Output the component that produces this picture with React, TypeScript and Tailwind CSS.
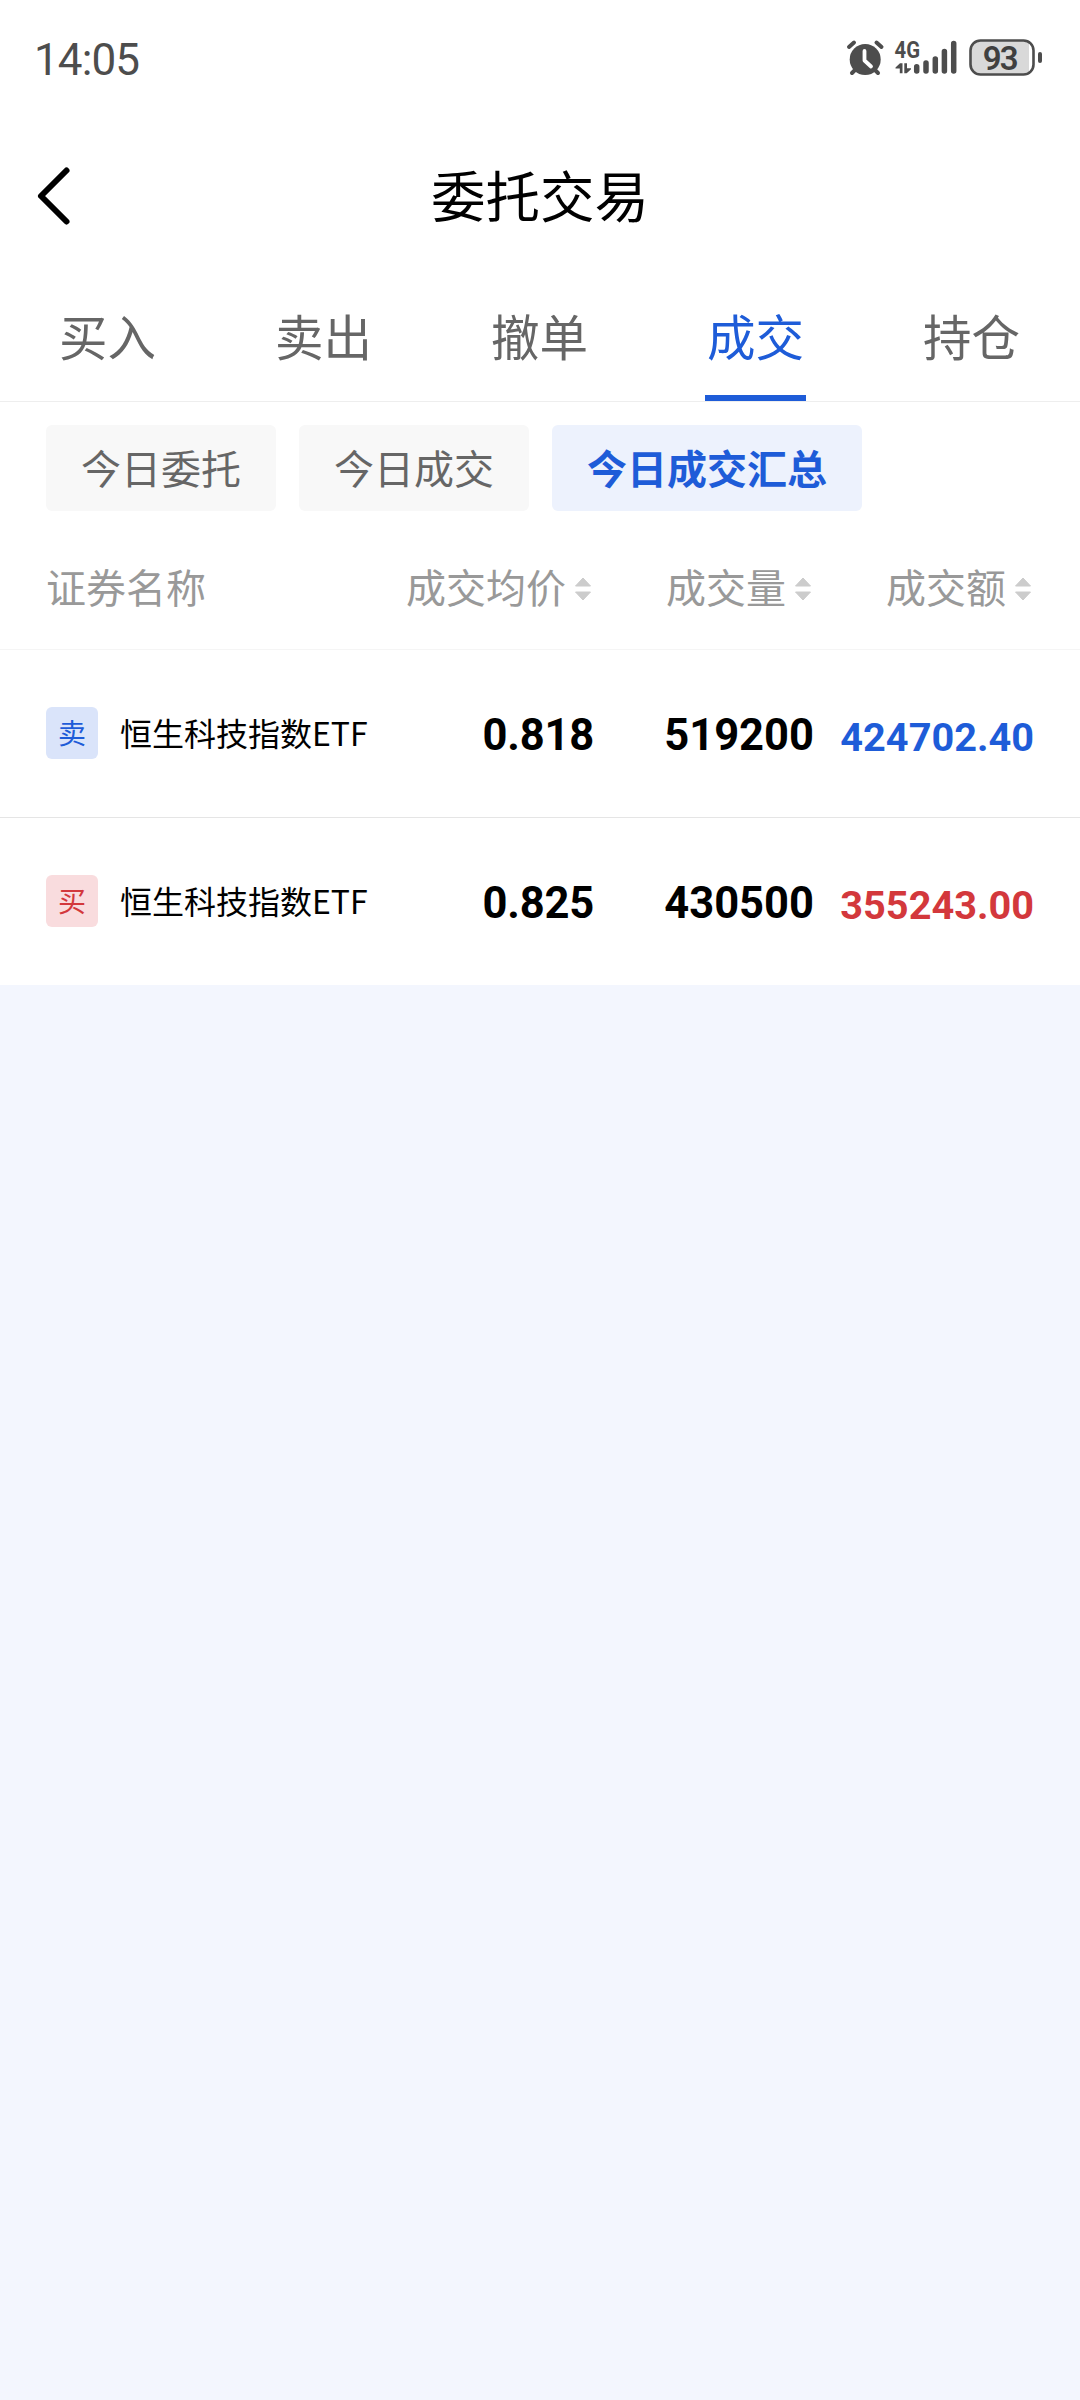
import clsx from "clsx";

const TABS = ["买入", "卖出", "撤单", "成交", "持仓"];
const FILTERS = ["今日委托", "今日成交", "今日成交汇总"];

interface Trade {
  side: "buy" | "sell";
  name: string;
  price: string;
  volume: string;
  amount: string;
}

const TRADES: Trade[] = [
  { side: "sell", name: "恒生科技指数ETF", price: "0.818", volume: "519200", amount: "424702.40" },
  { side: "buy", name: "恒生科技指数ETF", price: "0.825", volume: "430500", amount: "355243.00" },
];

function StatusBar() {
  return (
    <div className="flex h-[116px] items-center justify-between pr-[38px] pl-[34px] font-['Roboto',sans-serif] text-[#4d4d4d]">
      <span className="pt-[3px] text-[44px] leading-none tracking-[-0.9px]">14:05</span>
      <svg width="196" height="40" viewBox="0 0 196 40" fill="none">
        {/* alarm clock */}
        <g stroke="#4d4d4d" strokeLinecap="round">
          <path d="M3 9 8 4.500M30.500 4.500l5 4.500" strokeWidth="4" />
          <path d="M9 32l-3 3M29 32l3 3" strokeWidth="4" />
        </g>
        <circle cx="19.200" cy="21.500" r="15.500" fill="#4d4d4d" />
        <path d="M18.500 13v9.500l6.500 6" stroke="#fff" strokeWidth="3.800" strokeLinecap="round" strokeLinejoin="round" />
        {/* network type and traffic arrows */}
        <text x="48.500" y="19.700" fontSize="23" fontWeight="700" textLength="25.500" lengthAdjust="spacingAndGlyphs" fill="#4d4d4d">
          4G
        </text>
        <path d="M56.500 35.300h-2.700V30.500H49.500v-1l4.500-4.200h2.500zM58.300 25.300H61v4.900h4v1l-4.300 4.100h-2.400z" fill="#4d4d4d" />
        {/* signal strength */}
        <path
          d="M70.700 28.700v4.300M80 25v8M89.300 21v12M98.400 13.500V33M107.700 5.500V33"
          stroke="#4d4d4d"
          strokeWidth="5.500"
          strokeLinecap="round"
        />
        {/* battery */}
        <rect x="124.500" y="2.500" width="63" height="34" rx="10" fill="#fff" />
        <path d="M134.500 2.500H183v34h-48.500a10 10 0 0 1-10-10v-14a10 10 0 0 1 10-10z" fill="#d9d9d9" />
        <rect x="124.500" y="2.500" width="63" height="34" rx="10" stroke="#4d4d4d" strokeWidth="2.600" />
        <path d="M194 16v7" stroke="#4d4d4d" strokeWidth="4" strokeLinecap="round" />
        <text x="154.700" y="31.500" fontSize="33" fontWeight="600" textAnchor="middle" textLength="36" fill="#404040">
          93
        </text>
      </svg>
    </div>
  );
}

function SortIcon() {
  return (
    <svg className="mt-1.5 ml-2 shrink-0" width="18" height="24" viewBox="0 0 18 24" fill="#ccc" stroke="#ccc" strokeLinejoin="round">
      <path d="M9 1l7.500 8h-15z" />
      <path d="M9 23l7.500-8h-15z" />
    </svg>
  );
}

function TradeRow({ trade }: { trade: Trade }) {
  const isSell = trade.side === "sell";

  return (
    <div className="flex h-[168px] items-center border-b border-[#e5e5e5] pr-[46px] pb-px pl-[46px] last:h-[167px] last:border-b-0">
      <span
        className={clsx(
          "flex size-[52px] items-center justify-center rounded-md pb-0.5 text-[28px] leading-none",
          isSell ? "bg-[#dae4fa] text-[#1e5cd8]" : "bg-[#f9dcde] text-[#d3383c]",
        )}
      >
        {isSell ? "卖" : "买"}
      </span>
      <span className="ml-[22px] pb-0.5 text-[32px] leading-none">{trade.name}</span>
      <div className="flex flex-1 items-center justify-end pt-1.5 font-['Roboto',sans-serif] font-bold">
        <span className="text-[43.500px] leading-none tracking-[-0.2px]">{trade.price}</span>
        <span className="w-[220px] text-right text-[43.500px] leading-none">{trade.volume}</span>
        <span
          className={clsx(
            "mt-[3px] w-[220px] text-right text-[39.700px] leading-none",
            isSell ? "text-[#1e5cd8]" : "text-[#d3383c]",
          )}
        >
          {trade.amount}
        </span>
      </div>
    </div>
  );
}

export default function App() {
  const activeTab = "成交";
  const activeFilter = "今日成交汇总";

  return (
    <div className="min-h-[2400px] w-[1080px] bg-[#f3f6fe] font-['Noto_Sans_CJK_SC',sans-serif] text-black">
      <div className="bg-white">
        <StatusBar />

        <header className="grid h-40 grid-cols-[1fr_auto_1fr] items-center">
          <button type="button" aria-label="返回" className="ml-9">
            <svg width="36" height="60" viewBox="0 0 36 60" fill="none" stroke="#000" strokeWidth="6" strokeLinecap="round" strokeLinejoin="round">
              <path d="M30.500 4.500L5 30l25.500 25.500" />
            </svg>
          </button>
          <h1 className="pb-[3px] text-[54.500px] leading-none">委托交易</h1>
        </header>

        <nav className="grid h-[126px] grid-cols-5 border-b border-[#eee]">
          {TABS.map((tab) => (
            <button
              key={tab}
              type="button"
              className={clsx(
                "flex flex-col items-center pr-px text-[48.500px] leading-none",
                tab === activeTab ? "text-[#1e5cd8]" : "text-[#666]",
              )}
            >
              <span className="mt-[35px]">{tab}</span>
              {tab === activeTab && <span className="mt-auto h-1.5 w-[101px] bg-[#1e5cd8]" />}
            </button>
          ))}
        </nav>

        <div className="flex gap-[23px] px-[46px] pt-[23px]">
          {FILTERS.map((filter) => (
            <button
              key={filter}
              type="button"
              className={clsx(
                "h-[86px] rounded-md px-[35px] pb-0.5 text-[40px] leading-none",
                filter === activeFilter ? "bg-[#edf2fd] font-bold text-[#1e5cd8]" : "bg-[#f8f8f8] text-[#666]",
              )}
            >
              {filter}
            </button>
          ))}
        </div>

        <div className="flex h-[139px] items-center border-b border-[#f5f5f5] pt-3 pr-12 pl-[46px] text-[40px] leading-none text-[#999]">
          <span>证券名称</span>
          <div className="flex flex-1 justify-end">
            <span className="flex items-center">成交均价<SortIcon /></span>
            <span className="flex w-[220px] items-center justify-end">成交量<SortIcon /></span>
            <span className="flex w-[220px] items-center justify-end">成交额<SortIcon /></span>
          </div>
        </div>

        <div>
          {TRADES.map((trade) => (
            <TradeRow key={trade.side} trade={trade} />
          ))}
        </div>
      </div>
    </div>
  );
}
